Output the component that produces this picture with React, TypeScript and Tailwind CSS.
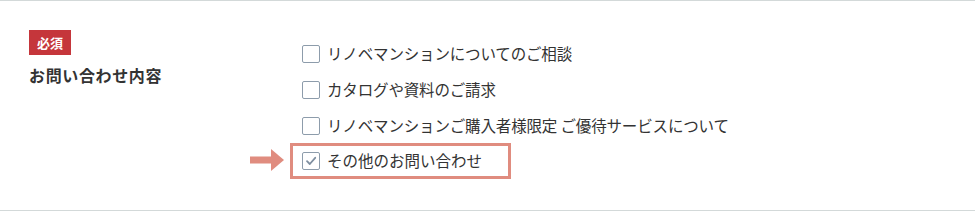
import React from "react";

const font = { fontFamily: '"Noto Sans CJK JP", "Noto Sans", sans-serif' };

function Box({ checked }: { checked?: boolean }) {
  return (
    <span className="flex h-[18px] w-[18px] shrink-0 items-center justify-center rounded-[2px] border border-[#8d9cab] bg-white">
      {checked && (
        <svg width="12" height="12" viewBox="0 0 12 12" fill="none">
          <path d="M2 6.2 L4.8 9 L10.2 2.8" stroke="#7f8fa0" strokeWidth="1.8" strokeLinecap="round" strokeLinejoin="round" />
        </svg>
      )}
    </span>
  );
}

export default function App() {
  const opts = [
    "リノベマンションについてのご相談",
    "カタログや資料のご請求",
    "リノベマンションご購入者様限定 ご優待サービスについて",
  ];
  return (
    <div className="h-[211px] w-[975px] border-y border-[#d3d9d9] bg-white text-[#333]" style={font}>
      <div className="flex">
        <div className="w-[302px] shrink-0 pl-[29px] pt-[29px]">
          <div className="flex h-[25px] w-[42px] items-center justify-center bg-[#c5363b] text-[13px] font-bold leading-none text-white">
            必須
          </div>
          <div className="mt-[10px] text-[16px] font-bold leading-[20px] tracking-[0.04em]">お問い合わせ内容</div>
        </div>
        <div className="flex flex-col pt-[35px]">
          {opts.map((o) => (
            <div key={o} className="flex h-[36px] items-center gap-[7px]">
              <Box />
              <span className="text-[15.5px] leading-none tracking-[-0.01em]">{o}</span>
            </div>
          ))}
          <div className="relative -ml-[12px] -mt-[1px] flex h-[36px] w-[221px] items-center gap-[7px] border-[3px] border-[#e08c7f] pl-[9px]">
            <svg className="absolute left-[-43px] top-[3px]" width="35" height="22" viewBox="0 0 35 22">
              <rect x="0" y="7.5" width="23" height="7" fill="#e08c7f" />
              <polygon points="21,0 34,11 21,22" fill="#e08c7f" />
            </svg>
            <Box checked />
            <span className="text-[15.5px] leading-none">その他のお問い合わせ</span>
          </div>
        </div>
      </div>
    </div>
  );
}
